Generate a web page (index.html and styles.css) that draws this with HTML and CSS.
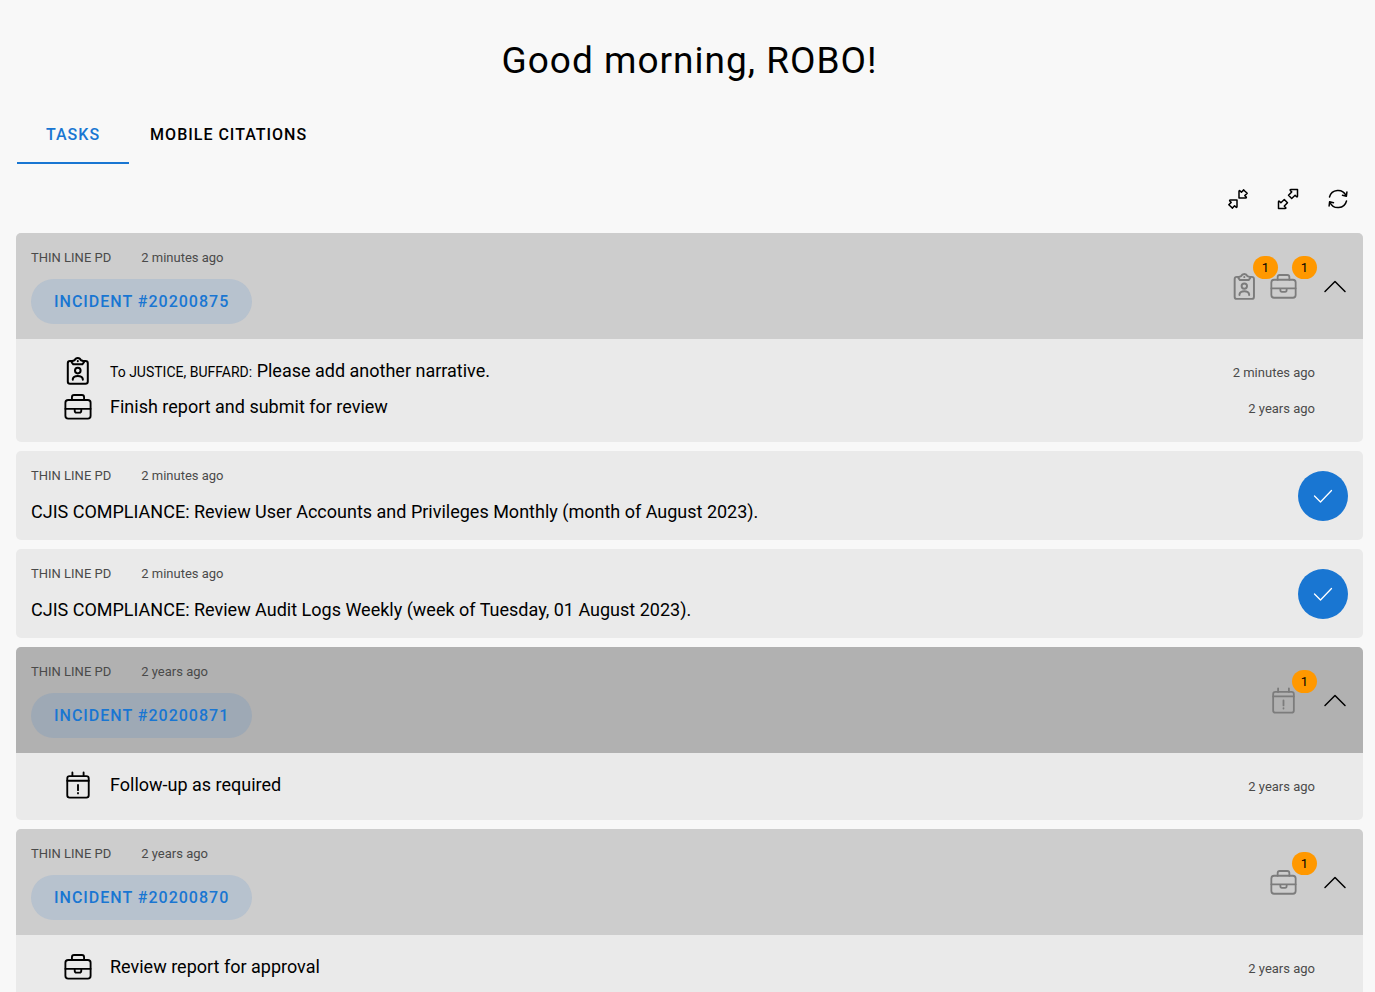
FILE: index.html
```html
<!DOCTYPE html>
<html lang="en">
<head>
<meta charset="utf-8">
<meta name="viewport" content="width=device-width, initial-scale=1">
<title>Tasks</title>
<link rel="stylesheet" href="styles.css">
</head>
<body>
<svg class="sprite" aria-hidden="true">
  <symbol id="clipboard" viewBox="0 0 28 28">
    <path d="M8 4H6Q3.800 4 3.800 6.200V24.500Q3.800 26.800 6 26.800H21.500Q23.800 26.800 23.800 24.500V6.200Q23.800 4 21.500 4H20"/>
    <path d="M10.500 3.300Q11.500 1 13.800 1T17 3.300L19.800 4.300Q20.500 4.600 19.800 5.400L18.300 7.300H9.300L7.800 5.400Q7.200 4.600 7.800 4.300Z"/>
    <circle cx="13.800" cy="13.600" r="2.800"/>
    <path d="M8.800 22.800V22Q9.500 19 13.800 19T18.800 22V22.800M13.800 4v0.300"/>
  </symbol>
  <symbol id="briefcase" viewBox="0 0 30 30">
    <rect x="1.500" y="7.500" width="27" height="20" rx="3"/>
    <path d="M8.500 7.500V4.500Q8.500 2.200 10.800 2.200H19.200Q21.500 2.200 21.500 4.500V7.500M1.500 17H28.500M11.500 17V19Q11.500 21 13.300 21H16.700Q18.500 21 18.500 19V17"/>
  </symbol>
  <symbol id="calendar" viewBox="0 0 30 30">
    <rect x="3.500" y="5.500" width="23" height="23" rx="2.500"/>
    <path d="M3.500 10.500H26.500M9 1.500V5.500M21 1.500V5.500M15 15V20.500M15 23.500V24"/>
  </symbol>
  <symbol id="collapse" viewBox="0 0 24 24">
    <path d="M13 11V4.500Q13 3 14.200 4L15.400 5.200L17.700 2.900L19 4.300L21.200 6.300L18.800 8.600L20 9.800Q21 11 19.500 11Z"/>
    <path d="M11 13V19.500Q11 21 9.800 20L8.600 18.800L6.300 21.100L5 19.700L2.800 17.700L5.200 15.400L4 14.200Q3 13 4.500 13Z"/>
  </symbol>
  <symbol id="expand" viewBox="0 0 24 24">
    <path d="M21.500 2.500V9Q21.500 10.500 20.300 9.500L19.100 8.300L15.700 11.500L12.500 8.300L15.700 4.900L14.500 3.700Q13.500 2.500 15 2.500Z"/>
    <path d="M2.500 21.500V15Q2.500 13.500 3.700 14.500L4.900 15.700L8.300 12.500L11.500 15.700L8.300 19.100L9.500 20.300Q10.500 21.500 9 21.500Z"/>
  </symbol>
  <symbol id="refresh" viewBox="0 0 24 24">
    <path d="M3.500 10A8.800 8.800 0 0 1 20 8.500M20.500 14A8.800 8.800 0 0 1 4 15.500"/>
    <path d="M20.900 5L20.400 9.200L16.500 8.300M3.100 19L3.600 14.800L7.500 15.700"/>
  </symbol>
  <symbol id="chevron" viewBox="0 0 24 24"><path d="M2 16.500L12 6.500L22 16.500"/></symbol>
  <symbol id="check" viewBox="0 0 24 24"><path d="M3.500 12L9.500 18L20.500 6.500"/></symbol>
</svg>

<main class="page">
  <h1 class="greeting">Good morning, ROBO!</h1>

  <div class="tabs" role="tablist">
    <button class="tab tab-active" role="tab" aria-selected="true">TASKS</button>
    <button class="tab" role="tab" aria-selected="false">MOBILE CITATIONS</button>
  </div>

  <div class="toolbar">
    <button class="tool" aria-label="Collapse all"><svg class="icon-tool"><use href="#collapse"/></svg></button>
    <button class="tool" aria-label="Expand all"><svg class="icon-tool"><use href="#expand"/></svg></button>
    <button class="tool" aria-label="Refresh"><svg class="icon-tool"><use href="#refresh"/></svg></button>
  </div>

  <div class="cards">
    <section class="card">
      <header class="card-head">
        <div>
          <p class="meta"><span>THIN LINE PD</span><span>2 minutes ago</span></p>
          <button class="incident">INCIDENT #20200875</button>
        </div>
        <div class="summary">
          <span class="count"><svg class="icon-count"><use href="#clipboard"/></svg><span class="badge">1</span></span>
          <span class="count"><svg class="icon-count"><use href="#briefcase"/></svg><span class="badge">1</span></span>
          <button class="toggle" aria-label="Collapse"><svg class="icon-tool"><use href="#chevron"/></svg></button>
        </div>
      </header>
      <ul class="tasks">
        <li class="task"><svg class="icon-task"><use href="#clipboard"/></svg><span class="task-text"><small class="recipient">To JUSTICE, BUFFARD:</small> Please add another narrative.</span><span class="age">2 minutes ago</span></li>
        <li class="task"><svg class="icon-task"><use href="#briefcase"/></svg><span class="task-text">Finish report and submit for review</span><span class="age">2 years ago</span></li>
      </ul>
    </section>

    <section class="card notice">
      <div>
        <p class="meta"><span>THIN LINE PD</span><span>2 minutes ago</span></p>
        <p class="notice-text">CJIS COMPLIANCE: Review User Accounts and Privileges Monthly (month of August 2023).</p>
      </div>
      <button class="done" aria-label="Mark complete"><svg class="icon-check"><use href="#check"/></svg></button>
    </section>

    <section class="card notice">
      <div>
        <p class="meta"><span>THIN LINE PD</span><span>2 minutes ago</span></p>
        <p class="notice-text">CJIS COMPLIANCE: Review Audit Logs Weekly (week of Tuesday, 01 August 2023).</p>
      </div>
      <button class="done" aria-label="Mark complete"><svg class="icon-check"><use href="#check"/></svg></button>
    </section>

    <section class="card">
      <header class="card-head card-head-dark">
        <div>
          <p class="meta"><span>THIN LINE PD</span><span>2 years ago</span></p>
          <button class="incident">INCIDENT #20200871</button>
        </div>
        <div class="summary">
          <span class="count"><svg class="icon-count"><use href="#calendar"/></svg><span class="badge">1</span></span>
          <button class="toggle" aria-label="Collapse"><svg class="icon-tool"><use href="#chevron"/></svg></button>
        </div>
      </header>
      <ul class="tasks">
        <li class="task"><svg class="icon-task"><use href="#calendar"/></svg><span class="task-text">Follow-up as required</span><span class="age">2 years ago</span></li>
      </ul>
    </section>

    <section class="card">
      <header class="card-head">
        <div>
          <p class="meta"><span>THIN LINE PD</span><span>2 years ago</span></p>
          <button class="incident">INCIDENT #20200870</button>
        </div>
        <div class="summary">
          <span class="count"><svg class="icon-count"><use href="#briefcase"/></svg><span class="badge">1</span></span>
          <button class="toggle" aria-label="Collapse"><svg class="icon-tool"><use href="#chevron"/></svg></button>
        </div>
      </header>
      <ul class="tasks">
        <li class="task"><svg class="icon-task"><use href="#briefcase"/></svg><span class="task-text">Review report for approval</span><span class="age">2 years ago</span></li>
      </ul>
    </section>
  </div>
</main>
</body>
</html>
```
FILE: styles.css
```css
* { box-sizing: border-box; }
body {
  margin: 0;
  height: 100vh;
  overflow: hidden;
  background: #f8f8f8;
  color: #000;
  font: 18px/24px Roboto, "Liberation Sans", sans-serif;
}
h1, p, ul { margin: 0; padding: 0; }
ul { list-style: none; }
button {
  border: 0;
  padding: 0;
  background: none;
  color: inherit;
  font: inherit;
  cursor: pointer;
}
svg {
  display: block;
  flex: none;
  fill: none;
  stroke: currentColor;
  stroke-width: 2;
  stroke-linecap: round;
  stroke-linejoin: round;
}
.sprite { position: absolute; width: 0; height: 0; }

.page { padding: 36px 12px 0 16px; }
.greeting {
  text-align: center;
  font-size: 37px;
  font-weight: 400;
  line-height: 50px;
  letter-spacing: 1px;
}

.tabs { display: flex; margin-top: 19px; }
.tab {
  height: 59px;
  padding: 2px 21px 0;
  font-size: 16px;
  font-weight: 500;
  letter-spacing: 1px;
  border-bottom: 2px solid transparent;
}
.tab-active {
  margin-left: 1px;
  padding: 2px 29px 0;
  color: #1976d2;
  border-bottom-color: #1976d2;
}

.toolbar {
  display: flex;
  justify-content: flex-end;
  padding: 10px 0 9px;
}
.tool {
  display: grid;
  place-items: center;
  width: 50px;
  height: 50px;
}
.icon-tool { width: 24px; height: 24px; stroke-width: 1.5; }

.cards { display: flex; flex-direction: column; gap: 9px; }
.card {
  overflow: hidden;
  flex: none;
  border-radius: 5px;
  background: #eaeaea;
}
.card-head {
  display: flex;
  justify-content: space-between;
  padding: 16px 16px 15px 15px;
  background: #cdcdcd;
}
.card-head-dark { background: #b1b1b1; }
.meta {
  display: flex;
  gap: 30px;
  font-size: 13px;
  line-height: 18px;
  color: #4a4a4a;
}
.incident {
  height: 45px;
  margin-top: 12px;
  padding: 0 23px;
  border-radius: 23px;
  background: rgba(25, 118, 210, 0.12);
  color: #1976d2;
  font-size: 16px;
  font-weight: 500;
  letter-spacing: 1px;
}
.summary { display: flex; align-items: center; gap: 12px; }
.count { position: relative; color: #7c7c7c; }
.icon-count { width: 27px; height: 27px; }
.badge {
  position: absolute;
  left: 22px;
  top: -17px;
  width: 25px;
  height: 23px;
  border-radius: 12px;
  background: #ff9800;
  color: #000;
  font-size: 13px;
  line-height: 23px;
  text-align: center;
}
.toggle { padding-left: 14px; }

.tasks { padding: 14px 48px 17px; }
.task {
  display: flex;
  align-items: center;
  gap: 18px;
  height: 36px;
}
.icon-task { width: 28px; height: 28px; }
.task-text { flex: 1; }
.recipient { font-size: 14px; }
.age { padding-top: 3px; font-size: 13px; color: #4a4a4a; }

.notice {
  display: flex;
  align-items: center;
  justify-content: space-between;
  padding: 16px 15px;
}
.notice-text { margin-top: 15px; }
.done {
  display: grid;
  place-items: center;
  flex: none;
  width: 50px;
  height: 50px;
  border-radius: 50%;
  background: #1976d2;
  color: #fff;
}
.icon-check { width: 24px; height: 24px; stroke-width: 1.3; }
```
